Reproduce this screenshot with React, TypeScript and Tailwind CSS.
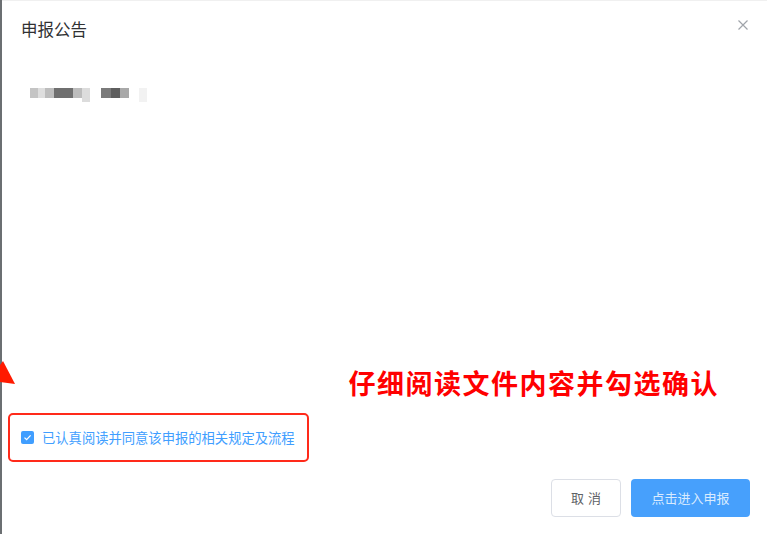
export default function App() {
  return (
    <div
      className="relative w-[767px] h-[534px] overflow-hidden bg-white flex"
      style={{ fontFamily: '"Noto Sans CJK SC", "Noto Sans", sans-serif' }}
    >
      {/* left edge of page behind dialog */}
      <div className="w-[2px] h-full bg-[#6b6f72] shrink-0" />

      <div className="flex-1 flex flex-col border-t border-[#f0f0f0] relative">
        {/* header */}
        <div className="flex items-start justify-between pl-[19px] pr-[18px] pt-[16px]">
          <h2 className="text-[16.5px] leading-[24px] text-[#303133]">申报公告</h2>
          <button className="text-[#909399] mt-[2px]">
            <svg width="12" height="12" viewBox="0 0 12 12">
              <path d="M1.5 1.5 L10.5 10.5 M10.5 1.5 L1.5 10.5" stroke="#a0a4aa" strokeWidth="1.2" />
            </svg>
          </button>
        </div>

        {/* blurred content */}
        <div className="flex items-start pl-[28px] pt-[47px] h-[16px] box-content">
          <div className="w-[8px] h-[10px] bg-[#c4c4c4] blur-[0.5px]" />
          <div className="w-[7px] h-[10px] bg-[#dedede]" />
          <div className="w-[9px] h-[10px] bg-[#bdbdbd]" />
          <div className="w-[19px] h-[10px] bg-[#6f6f6f] blur-[0.5px]" />
          <div className="w-[9px] h-[10px] bg-[#bcbcbc]" />
          <div className="w-[8px] h-[14px] bg-[#dcdcdc]" />
          <div className="w-[11px] h-[10px] bg-white" />
          <div className="w-[10px] h-[10px] bg-[#7a7a7a]" />
          <div className="w-[9px] h-[10px] bg-[#5e5e5e]" />
          <div className="w-[9px] h-[10px] bg-[#a8a8a8]" />
          <div className="w-[10px] h-[10px] bg-white" />
          <div className="w-[8px] h-[14px] bg-[#f2f2f2]" />
        </div>

        <div className="flex-1" />

        {/* annotation */}
        <div className="flex justify-end pr-[48px] mb-[14px]">
          <span className="text-[27px] leading-[32px] font-bold text-[#ff0000] tracking-[1.5px]">
            仔细阅读文件内容并勾选确认
          </span>
        </div>

        {/* agreement */}
        <div className="ml-[6px] w-[301px] h-[49px] border-2 border-[#ff2a1a] rounded-[5px] flex items-center pl-[11px] gap-[8px] mb-[-1px]">
          <span className="w-[13px] h-[13px] rounded-[2px] bg-[#409eff] flex items-center justify-center">
            <svg width="9" height="9" viewBox="0 0 9 9">
              <path d="M1.5 4.6 L3.6 6.6 L7.6 2.4" stroke="white" strokeWidth="1.3" fill="none" />
            </svg>
          </span>
          <span className="text-[13.3px] leading-[16px] text-[#409eff]">已认真阅读并同意该申报的相关规定及流程</span>
        </div>

        {/* footer */}
        <div className="flex justify-end gap-[10px] pr-[17px] pt-[18px] pb-[17px]">
          <button className="w-[70px] h-[38px] border border-[#dcdfe6] rounded-[4px] bg-white text-[13px] text-[#606266] tracking-[4px] pl-[4px]">
            取消
          </button>
          <button className="w-[119px] h-[38px] rounded-[4px] bg-[#47a0fc] text-[13px] text-[#d9ebff]">
            点击进入申报
          </button>
        </div>

        <span
          className="absolute right-[6px] bottom-[-4px] text-[14px] font-bold text-white tracking-[3px]"
          style={{ fontFamily: '"Liberation Sans", sans-serif' }}
        >
          m.lu80.c
        </span>
      </div>

      {/* red arrow tip on the left edge */}
      <svg className="absolute left-0 top-[361px]" width="16" height="25" viewBox="0 0 16 25">
        <path d="M3 0 L15 23 L0 21 L0 4 Z" fill="#ff1a00" />
      </svg>
    </div>
  );
}
